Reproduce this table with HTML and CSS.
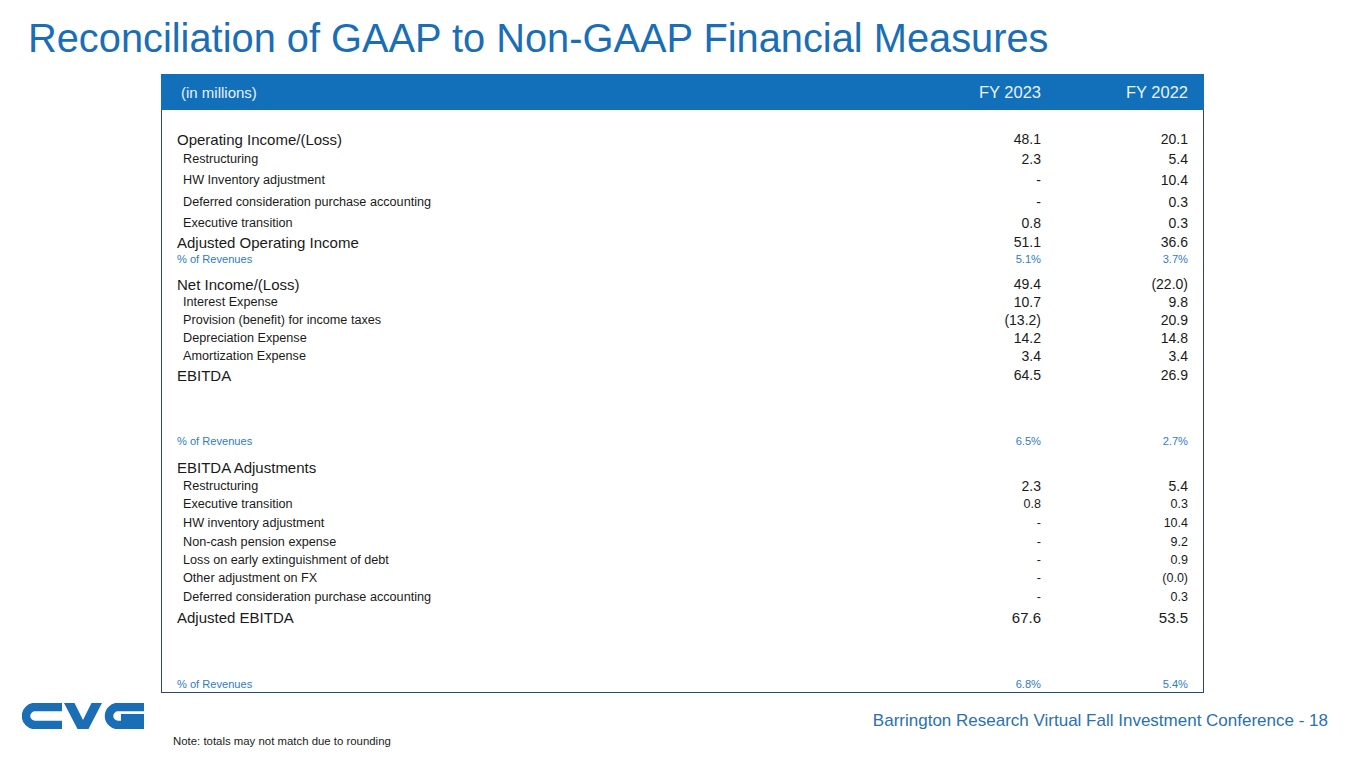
FILE: index.html
```html
<!DOCTYPE html>
<html>
<head>
<meta charset="utf-8">
<link rel="stylesheet" href="styles.css">
</head>
<body>
<div class="slide">
  <h1 class="title">Reconciliation of GAAP to Non-GAAP Financial Measures</h1>
  <div class="table">
    <div class="row head">
      <div class="lbl">(in millions)</div>
      <div class="v">FY 2023</div>
      <div class="v">FY 2022</div>
    </div>
    <div class="sp" style="height:19px"></div>
    <div class="row main h20"><div class="lbl">Operating Income/(Loss)</div><div class="v">48.1</div><div class="v">20.1</div></div>
    <div class="row sub h20"><div class="lbl">Restructuring</div><div class="v">2.3</div><div class="v">5.4</div></div>
    <div class="row sub h22"><div class="lbl">HW Inventory adjustment</div><div class="v">-</div><div class="v">10.4</div></div>
    <div class="row sub h22"><div class="lbl">Deferred consideration purchase accounting</div><div class="v">-</div><div class="v">0.3</div></div>
    <div class="row sub h20"><div class="lbl">Executive transition</div><div class="v">0.8</div><div class="v">0.3</div></div>
    <div class="row main h18"><div class="lbl">Adjusted Operating Income</div><div class="v">51.1</div><div class="v">36.6</div></div>
    <div class="row pct h16"><div class="lbl">% of Revenues</div><div class="v">5.1%</div><div class="v">3.7%</div></div>
    <div class="sp" style="height:8px"></div>
    <div class="row main h18"><div class="lbl">Net Income/(Loss)</div><div class="v">49.4</div><div class="v">(22.0)</div></div>
    <div class="row sub h18"><div class="lbl">Interest Expense</div><div class="v">10.7</div><div class="v">9.8</div></div>
    <div class="row sub h18"><div class="lbl">Provision (benefit) for income taxes</div><div class="v">(13.2)</div><div class="v">20.9</div></div>
    <div class="row sub h18"><div class="lbl">Depreciation Expense</div><div class="v">14.2</div><div class="v">14.8</div></div>
    <div class="row sub h18"><div class="lbl">Amortization Expense</div><div class="v">3.4</div><div class="v">3.4</div></div>
    <div class="row main h20"><div class="lbl">EBITDA</div><div class="v">64.5</div><div class="v">26.9</div></div>
    <div class="sp" style="height:48px"></div>
    <div class="row pct h16"><div class="lbl">% of Revenues</div><div class="v">6.5%</div><div class="v">2.7%</div></div>
    <div class="sp" style="height:8px"></div>
    <div class="row main h20"><div class="lbl">EBITDA Adjustments</div><div class="v"></div><div class="v"></div></div>
    <div class="row sub h18"><div class="lbl">Restructuring</div><div class="v">2.3</div><div class="v">5.4</div></div>
    <div class="row sub sm h18"><div class="lbl">Executive transition</div><div class="v">0.8</div><div class="v">0.3</div></div>
    <div class="row sub sm h20"><div class="lbl">HW inventory adjustment</div><div class="v">-</div><div class="v">10.4</div></div>
    <div class="row sub sm h18"><div class="lbl">Non-cash pension expense</div><div class="v">-</div><div class="v">9.2</div></div>
    <div class="row sub sm h18"><div class="lbl">Loss on early extinguishment of debt</div><div class="v">-</div><div class="v">0.9</div></div>
    <div class="row sub sm h18"><div class="lbl">Other adjustment on FX</div><div class="v">-</div><div class="v">(0.0)</div></div>
    <div class="row sub sm h20"><div class="lbl">Deferred consideration purchase accounting</div><div class="v">-</div><div class="v">0.3</div></div>
    <div class="row main big h20"><div class="lbl">Adjusted EBITDA</div><div class="v">67.6</div><div class="v">53.5</div></div>
    <div class="sp" style="height:49px"></div>
    <div class="row pct h16"><div class="lbl">% of Revenues</div><div class="v">6.8%</div><div class="v">5.4%</div></div>
  </div>
  <div class="bottom">
    <svg class="logo" width="122" height="26" viewBox="0 0 122 26" aria-label="CVG">
      <path d="M40,4 H13 A9,9 0 0 0 13,22 H40" fill="none" stroke="#1a6eb6" stroke-width="8.5"/>
      <polygon points="42,0 52.5,0 61,17 69.5,0 80,0 66.5,26 55.5,26" fill="#1a6eb6"/>
      <path d="M122,4 H96 A9,9 0 0 0 96,22 H118" fill="none" stroke="#1a6eb6" stroke-width="8.5"/>
      <rect x="99" y="11" width="23" height="7.5" fill="#1a6eb6"/>
      <rect x="114" y="11" width="8" height="15" fill="#1a6eb6"/>
    </svg>
    <div class="conf">Barrington Research Virtual Fall Investment Conference - 18</div>
  </div>
  <div class="note">Note: totals may not match due to rounding</div>
</div>
</body>
</html>
```

FILE: styles.css
```css
html, body {
  margin: 0;
  padding: 0;
  background: #ffffff;
}
.slide {
  width: 1365px;
  height: 768px;
  overflow: hidden;
  font-family: "Liberation Sans", Arial, sans-serif;
  color: #1a1a1a;
}
.title {
  margin: 15px 0 0 28px;
  font-size: 39.8px;
  line-height: 46px;
  font-weight: normal;
  color: #1a6eb6;
  white-space: nowrap;
}
.table {
  margin: 13px 0 0 161px;
  width: 1043px;
  box-sizing: border-box;
  border-left: 1px solid #2c4770;
  border-right: 1px solid #2c4770;
  border-bottom: 1px solid #2c4770;
  display: flex;
  flex-direction: column;
}
.row {
  display: grid;
  grid-template-columns: 1fr 120px 147px;
  padding-right: 15px;
  align-items: center;
}
.v {
  text-align: right;
  white-space: nowrap;
}
.lbl {
  white-space: nowrap;
}
.head {
  height: 36px;
  background: #1170b9;
  color: #e8f2fc;
  margin: 0 -1px;
  padding-right: 16px;
}
.head .lbl {
  padding-left: 20px;
  font-size: 15px;
}
.head .v {
  font-size: 16.5px;
}
.main .lbl {
  padding-left: 15px;
  font-size: 15px;
}
.main .v {
  font-size: 14px;
}
.big .v {
  font-size: 15px;
}
.sub .lbl {
  padding-left: 21px;
  font-size: 12.65px;
}
.sub .v {
  font-size: 14px;
}
.sub.sm .v {
  font-size: 12.5px;
}
.pct {
  color: #2f7cc4;
  font-size: 11.1px;
}
.pct .lbl {
  padding-left: 15px;
}
.h16 { height: 16px; }
.h18 { height: 18px; }
.h20 { height: 20px; }
.h22 { height: 22px; }
.bottom {
  display: flex;
  justify-content: space-between;
  align-items: flex-start;
  margin: 10px 37px 0 22px;
}
.logo {
  display: block;
}
.conf {
  margin-top: 8px;
  font-size: 17px;
  color: #2a70b3;
  white-space: nowrap;
}
.note {
  margin: 4px 0 0 173px;
  font-size: 11.4px;
  color: #1a1a1a;
}
```
